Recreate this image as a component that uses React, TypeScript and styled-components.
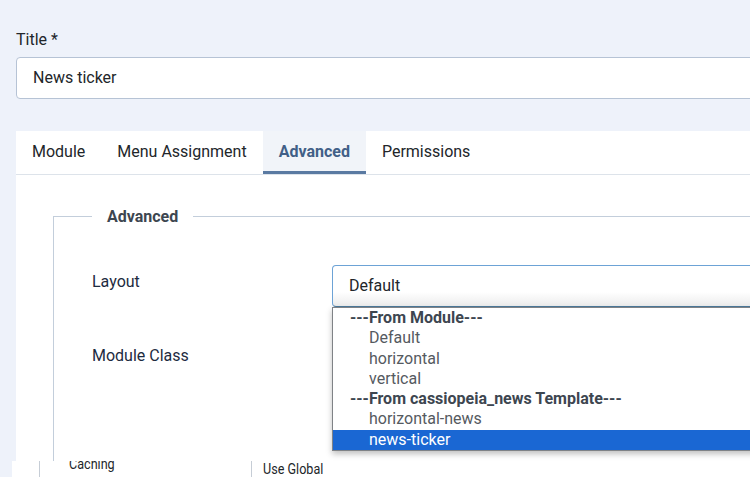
import styled, { createGlobalStyle } from "styled-components";

const GlobalStyle = createGlobalStyle`
  html, body {
    margin: 0;
    padding: 0;
    background: #eef2fa;
    overflow: hidden;
  }
  body {
    font-family: Roboto, "Noto Sans", sans-serif;
    color: #22262a;
  }
`;

type TabProps = { $active?: boolean };
type OptionProps = { $group?: boolean; $selected?: boolean };

const tabs = ["Module", "Menu Assignment", "Advanced", "Permissions"];

const layoutOptions = [
  { label: "---From Module---", group: true },
  { label: "Default" },
  { label: "horizontal" },
  { label: "vertical" },
  { label: "---From cassiopeia_news Template---", group: true },
  { label: "horizontal-news" },
  { label: "news-ticker", selected: true },
];

export default function App() {
  return (
    <>
      <GlobalStyle />
      <Page>
        <FieldLabel>Title *</FieldLabel>
        <TitleInput>News ticker</TitleInput>

        <TabsCard>
          <TabList>
            {tabs.map((t) => (
              <Tab key={t} $active={t === "Advanced"}>
                {t}
              </Tab>
            ))}
          </TabList>
          <TabPanel>
            <Fieldset>
              <Legend>Advanced</Legend>
              <Row>
                <RowLabel>Layout</RowLabel>
                <SelectWrap>
                  <SelectBox $focused>Default</SelectBox>
                  <Dropdown>
                    {layoutOptions.map((o) => (
                      <Option key={o.label} $group={o.group} $selected={o.selected}>
                        {o.label}
                      </Option>
                    ))}
                  </Dropdown>
                </SelectWrap>
              </Row>
              <Row>
                <RowLabel>Module Class</RowLabel>
                <SelectWrap>
                  <SelectBox />
                </SelectWrap>
              </Row>
            </Fieldset>
          </TabPanel>
        </TabsCard>

        <Strip>
          <StripCell $w={28} $pad={0} />
          <StripCell $w={212} $pad={29}>
            <StripText $shift={-5}>Caching</StripText>
          </StripCell>
          <StripCell $w={400} $pad={11} $last>
            <StripText $shift={0}>Use Global</StripText>
          </StripCell>
        </Strip>
      </Page>
    </>
  );
}

const Page = styled.div`
  width: 1100px;
  padding: 28px 0 0 16px;
`;

const FieldLabel = styled.div`
  font-size: 16px;
  line-height: 24px;
  margin-bottom: 5px;
  color: #22262a;
`;

const TitleInput = styled.div`
  box-sizing: border-box;
  height: 42px;
  border: 1px solid #b6c3d5;
  border-radius: 4px;
  background: #fff;
  padding: 0 16px;
  font-size: 16px;
  line-height: 40px;
  color: #22262a;
`;

const TabsCard = styled.div`
  margin-top: 32px;
  background: #fff;
`;

const TabList = styled.div`
  display: flex;
  height: 43px;
  border-bottom: 1px solid #dde3ea;
`;

const Tab = styled.div<TabProps>`
  box-sizing: border-box;
  padding: 0 16px;
  height: 43px;
  line-height: 42px;
  font-size: 16px;
  font-weight: ${({ $active }) => ($active ? 700 : 400)};
  color: ${({ $active }) => ($active ? "#415f87" : "#22262a")};
  background: ${({ $active }) => ($active ? "#f1f4f9" : "transparent")};
  border-bottom: 3px solid ${({ $active }) => ($active ? "#5a7aa2" : "transparent")};
`;

const TabPanel = styled.div`
  height: 286px;
  overflow: hidden;
  padding: 32px 0 0 37px;
  box-sizing: border-box;
`;

const Fieldset = styled.fieldset`
  margin: 0;
  padding: 39px 0 0 38px;
  min-height: 500px;
  border: 1px solid #c3cedb;
`;

const Legend = styled.legend`
  padding: 0 15px;
  font-size: 16px;
  font-weight: 700;
  line-height: 19px;
  color: #3d4650;
`;

const Row = styled.div`
  display: grid;
  grid-template-columns: 240px 1fr;
  margin-bottom: 32px;
`;

const RowLabel = styled.div`
  font-size: 16px;
  line-height: 24px;
  padding-top: 5px;
  color: #1d2b3f;
`;

const SelectWrap = styled.div`
  position: relative;
`;

const SelectBox = styled.div<{ $focused?: boolean }>`
  box-sizing: border-box;
  height: 42px;
  padding: 0 16px;
  font-size: 16px;
  line-height: 40px;
  color: #22262a;
  border: 1px solid ${({ $focused }) => ($focused ? "#6da3d6" : "#b6c3d5")};
  border-bottom-color: ${({ $focused }) => ($focused ? "#4d7a9b" : "#b6c3d5")};
  border-radius: 4px 0 0 4px;
  background: ${({ $focused }) =>
    $focused ? "linear-gradient(#fff 65%, #ececec)" : "#fff"};
`;

const Dropdown = styled.div`
  position: absolute;
  top: 42px;
  left: 0;
  width: 600px;
  background: #fff;
  border: 1px solid #7f8286;
  box-shadow: 0 3px 6px rgba(0, 0, 0, 0.25);
  z-index: 2;
`;

const Option = styled.div<OptionProps>`
  height: 20.3px;
  line-height: 20px;
  font-size: 16px;
  padding-left: ${({ $group }) => ($group ? "17px" : "36px")};
  font-weight: ${({ $group }) => ($group ? 700 : 400)};
  color: ${({ $group, $selected }) =>
    $selected ? "#fff" : $group ? "#3d4650" : "#555a5f"};
  background: ${({ $selected }) => ($selected ? "#1a67d3" : "transparent")};
`;

const Strip = styled.div`
  display: flex;
  margin-left: -4px;
  height: 16px;
  overflow: hidden;
  background: #fff;
`;

const StripCell = styled.div<{ $w: number; $pad: number; $last?: boolean }>`
  width: ${({ $w }) => $w}px;
  padding-left: ${({ $pad }) => $pad}px;
  box-sizing: border-box;
  flex: none;
  border-right: ${({ $last }) => ($last ? "none" : "1px solid #c6cdd6")};
  overflow: hidden;
`;

const StripText = styled.div<{ $shift: number }>`
  margin-top: ${({ $shift }) => $shift}px;
  font-size: 15px;
  line-height: 16px;
  color: #22262a;
  transform: scaleX(0.84);
  transform-origin: left center;
  white-space: nowrap;
`;
